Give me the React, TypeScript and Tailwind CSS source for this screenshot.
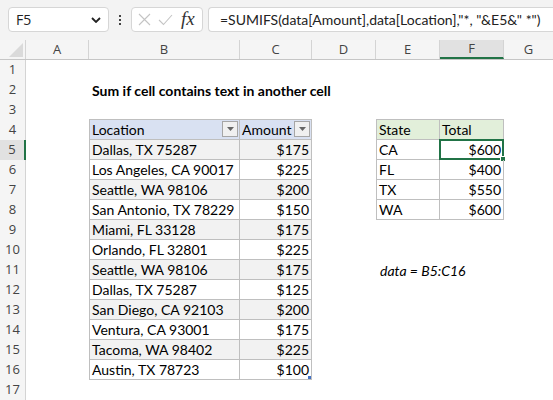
import React from 'react';

// sheet data: B5:C16 and the summary table in E4:F8
const data: [string, string][] = [
  ['Dallas, TX 75287', '$175'],
  ['Los Angeles, CA 90017', '$225'],
  ['Seattle, WA 98106', '$200'],
  ['San Antonio, TX 78229', '$150'],
  ['Miami, FL 33128', '$175'],
  ['Orlando, FL 32801', '$225'],
  ['Seattle, WA 98106', '$175'],
  ['Dallas, TX 75287', '$125'],
  ['San Diego, CA 92103', '$200'],
  ['Ventura, CA 93001', '$175'],
  ['Tacoma, WA 98402', '$225'],
  ['Austin, TX 78723', '$100'],
];

const totals: [string, string][] = [
  ['CA', '$600'],
  ['FL', '$400'],
  ['TX', '$550'],
  ['WA', '$600'],
];

const cellFont = { fontFamily: 'Lato, "Liberation Sans", sans-serif' };

function FilterButton() {
  return (
    <div className="absolute right-[1px] top-[1px] w-4 h-4 bg-[#f0f0f0] border border-[#a6a6a6] flex items-center justify-center">
      <svg width="7" height="4" viewBox="0 0 7 4">
        <path d="M0 0 L7 0 L3.5 4 Z" fill="#666" />
      </svg>
    </div>
  );
}

function TopBar() {
  return (
    <div className="h-10 bg-[#f3f3f3] flex items-start pt-[7px] pl-2 font-['Open_Sans',sans-serif]">
      <div className="w-[101px] shrink-0 h-[25px] bg-white border border-[#d6d6d6] rounded-[4px] flex items-center justify-between pl-[7px] pr-[7px]">
        <span className="text-[14px] text-[#222]">F5</span>
        <svg width="10" height="6" viewBox="0 0 10 6">
          <path d="M1 1 L5 5 L9 1" stroke="#222" strokeWidth="1.8" fill="none" />
        </svg>
      </div>
      <div className="w-[22px] shrink-0 h-[25px] flex flex-col items-center justify-center gap-[2px]">
        <span className="w-[2px] h-[2px] bg-[#444]" />
        <span className="w-[2px] h-[2px] bg-[#444]" />
        <span className="w-[2px] h-[2px] bg-[#444]" />
      </div>
      <div className="w-[72px] shrink-0 h-[25px] bg-white border border-[#d6d6d6] rounded-[4px] flex items-center pl-[6px] gap-[7px]">
        <svg width="13" height="13" viewBox="0 0 13 13">
          <path d="M1 1 L12 12 M12 1 L1 12" stroke="#c4c4c4" strokeWidth="1.1" />
        </svg>
        <svg width="15" height="12" viewBox="0 0 15 12">
          <path d="M1 6 L5.5 10.5 L14 1" stroke="#c4c4c4" strokeWidth="1.1" fill="none" />
        </svg>
        <span className="text-[19px] italic text-[#333] font-['Liberation_Serif',serif] leading-none ml-[1px] -mt-[2px]">
          fx
        </span>
      </div>
      <div className="ml-[5px] flex-1 min-w-0 overflow-hidden h-[25px] bg-white border border-r-0 border-[#d6d6d6] rounded-l-[4px] flex items-center pl-[11px]">
        <span className="text-[14px] text-[#222] whitespace-nowrap font-['Lato',sans-serif]">
          =SUMIFS(data[Amount],data[Location],"*, "&amp;E5&amp;" *")
        </span>
      </div>
    </div>
  );
}

function ColumnHeaders() {
  const head = 'h-full border-r border-[#d4d4d4] flex items-center justify-center text-[13px] text-[#444]';
  return (
    <div className="flex h-5 bg-[#f5f5f5] border-b border-[#c6c6c6] font-['Open_Sans',sans-serif]">
      <div className="w-[26px] h-full border-r border-[#d4d4d4] relative overflow-hidden">
        <svg className="absolute right-[2px] bottom-[2px]" width="14" height="14" viewBox="0 0 14 14">
          <path d="M14 0 L14 14 L0 14 Z" fill="#dadada" />
        </svg>
      </div>
      <div className={`w-[63px] ${head}`}>A</div>
      <div className={`w-[151px] ${head}`}>B</div>
      <div className={`w-[72px] ${head}`}>C</div>
      <div className={`w-[64px] ${head}`}>D</div>
      <div className={`w-[64px] ${head}`}>E</div>
      <div className="w-[64px] h-full border-r border-[#d4d4d4] flex items-center justify-center text-[13px] text-[#444] bg-[#e1e1e1] border-b-2 border-b-[#217346]">
        F
      </div>
      <div className={`flex-1 ${head} border-r-0`}>G</div>
    </div>
  );
}

function SheetRow({ n }: { n: number }) {
  const item = n >= 5 && n <= 16 ? data[n - 5] : null;
  const total = n >= 5 && n <= 8 ? totals[n - 5] : null;
  const band = n % 2 === 1 ? 'bg-[#f2f2f2]' : 'bg-white';
  const tBorder = 'border-b border-r border-[#bfbfbf]';

  let b: React.ReactNode = <div className="w-[151px] h-full" />;
  let c: React.ReactNode = <div className="w-[72px] h-full" />;
  if (n === 2) {
    b = (
      <div className="w-[151px] h-full flex items-center pl-[3px] whitespace-nowrap font-bold overflow-visible">
        Sum if cell contains text in another cell
      </div>
    );
  } else if (n === 3) {
    b = <div className="w-[151px] h-full border-b border-[#bfbfbf]" />;
    c = <div className="w-[72px] h-full border-b border-[#bfbfbf]" />;
  } else if (n === 4) {
    b = (
      <div className={`w-[151px] h-full relative bg-[#d9e1f2] border-l ${tBorder} flex items-center pl-[2px]`}>
        Location
        <FilterButton />
      </div>
    );
    c = (
      <div className={`w-[72px] h-full relative bg-[#d9e1f2] ${tBorder} flex items-center pl-[2px]`}>
        Amount
        <FilterButton />
      </div>
    );
  } else if (item) {
    b = (
      <div className={`w-[151px] h-full ${band} border-l ${tBorder} flex items-center pl-[2px] whitespace-nowrap`}>
        {item[0]}
      </div>
    );
    c = (
      <div className={`w-[72px] h-full relative ${band} ${tBorder} flex items-center justify-end pr-[2px]`}>
        {item[1]}
        {n === 16 && <span className="absolute right-0 bottom-0 w-[3px] h-[3px] bg-[#4472c4]" />}
      </div>
    );
  }

  let e: React.ReactNode = <div className="w-[64px] h-full" />;
  let f: React.ReactNode = <div className="w-[64px] h-full" />;
  if (n === 3) {
    e = <div className="w-[64px] h-full border-b border-[#bfbfbf]" />;
    f = <div className="w-[64px] h-full border-b border-[#bfbfbf]" />;
  } else if (n === 4) {
    e = <div className={`w-[64px] h-full bg-[#e2efda] border-l ${tBorder} flex items-center pl-[2px]`}>State</div>;
    f = <div className={`w-[64px] h-full bg-[#e2efda] ${tBorder} flex items-center pl-[2px]`}>Total</div>;
  } else if (total) {
    e = <div className={`w-[64px] h-full border-l ${tBorder} flex items-center pl-[2px]`}>{total[0]}</div>;
    f = (
      <div className={`w-[64px] h-full relative ${tBorder} flex items-center justify-end pr-[2px]`}>
        {total[1]}
        {n === 5 && (
          <>
            <span className="absolute -left-px -top-px -right-px -bottom-px border-2 border-[#217346]" />
            <span className="absolute -right-[3px] -bottom-[3px] w-[6px] h-[6px] bg-[#217346] border border-white" />
          </>
        )}
      </div>
    );
  } else if (n === 11) {
    e = (
      <div className="w-[64px] h-full flex items-center pl-[4px] whitespace-nowrap italic">
        data = B5:C16
      </div>
    );
  }

  const selected = n === 5;
  return (
    <div className="flex h-5 text-[14px] text-black" style={cellFont}>
      <div
        className={
          selected
            ? "w-[26px] h-full bg-[#e1e1e1] border-r-2 border-[#217346] flex items-center justify-center text-[13px] text-[#444] font-['Open_Sans',sans-serif]"
            : "w-[26px] h-full bg-[#f5f5f5] border-r border-[#d4d4d4] flex items-center justify-center text-[13px] text-[#444] font-['Open_Sans',sans-serif]"
        }
      >
        {n}
      </div>
      <div className="w-[63px] h-full" />
      {b}
      {c}
      <div className="w-[64px] h-full" />
      {e}
      {f}
      <div className="flex-1 h-full" />
    </div>
  );
}

export default function App() {
  const rows = Array.from({ length: 17 }, (_, i) => i + 1);
  return (
    <div className="w-[553px] h-[400px] overflow-hidden bg-white">
      <TopBar />
      <ColumnHeaders />
      {rows.map((n) => (
        <SheetRow key={n} n={n} />
      ))}
    </div>
  );
}
